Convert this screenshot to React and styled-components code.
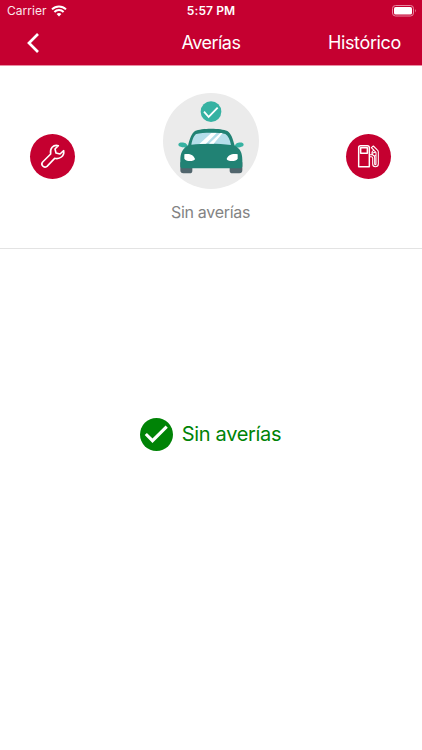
import React from "react";
import styled, { createGlobalStyle } from "styled-components";

const GlobalStyle = createGlobalStyle`
  * { box-sizing: border-box; }
  body { margin: 0; background: #fff; font-family: Inter, "Liberation Sans", sans-serif; }
`;

const Screen = styled.main`
  display: flex;
  flex-direction: column;
  width: 100%;
  height: 750px;
  background: #fff;
  overflow: hidden;
`;

const Header = styled.header`
  height: 66px;
  flex: none;
  background: #c50030;
  border-bottom: 1px solid #e98da3;
  color: #fff;
`;

const StatusBar = styled.div`
  display: grid;
  grid-template-columns: 1fr auto 1fr;
  align-items: center;
  height: 21px;
  padding: 0 5px 0 7px;
`;

const Carrier = styled.div`
  display: flex;
  align-items: center;
  gap: 4px;
  font-size: 12px;
  letter-spacing: 0.05px;
  color: #fbe6eb;
`;

const Clock = styled.div`
  margin-right: 2px;
  font-size: 12px;
  font-weight: 600;
  letter-spacing: 0.1px;
`;

const BatteryIcon = styled.svg`
  justify-self: end;
  display: block;
`;

const NavBar = styled.nav`
  display: grid;
  grid-template-columns: 1fr auto 1fr;
  align-items: center;
  height: 43px;
  padding: 0 21px 0 26px;
`;

const BackButton = styled.button`
  display: flex;
  justify-self: start;
  padding: 0;
  border: 0;
  background: none;
`;

const Title = styled.h1`
  margin: 0 5px 0 0;
  font-size: 18px;
  font-weight: 400;
  line-height: 22px;
  letter-spacing: -0.5px;
`;

const HistoryLink = styled.button`
  justify-self: end;
  padding: 0;
  border: 0;
  background: none;
  color: #fff;
  font: 400 18px/22px Inter, "Liberation Sans", sans-serif;
  letter-spacing: -0.35px;
`;

const Summary = styled.section`
  display: grid;
  grid-template-columns: 45px 1fr 45px;
  flex: none;
  height: 183px;
  padding: 27px 31px 0 30px;
  border-bottom: 1px solid #e3e3e3;
`;

const RoundButton = styled.button`
  width: 45px;
  height: 45px;
  margin-top: 41px;
  padding: 0;
  border: 0;
  border-radius: 50%;
  background: #c50030;

  svg { display: block; }
`;

const CarStatus = styled.div`
  display: flex;
  flex-direction: column;
  align-items: center;

  svg { display: block; }
`;

const CarLabel = styled.p`
  margin: 13px 0 0;
  color: #838383;
  font-size: 16px;
  line-height: 20px;
  letter-spacing: -0.3px;
`;

const Result = styled.section`
  display: flex;
  align-items: center;
  justify-content: center;
  gap: 9px;
  margin-top: 168px;
  padding-right: 1px;
  height: 34px;
  color: #008306;
`;

const ResultText = styled.span`
  font-size: 20px;
  line-height: 24px;
  letter-spacing: -0.32px;
`;

function WifiIcon() {
  return (
    <svg width="16" height="12" viewBox="0 0 16 12" fill="none" stroke="#fff" strokeWidth="2">
      <path d="M1 4.4C5 .5 11 .5 15 4.4M3.4 7C6 4.4 10 4.4 12.6 7" />
      <path d="M5.6 8.9C7 7.7 9 7.7 10.4 8.9L8 11.4Z" fill="#fff" stroke="none" />
    </svg>
  );
}

function CarIllustration() {
  return (
    <svg width="96" height="96" viewBox="24 24 288 288">
      <circle cx="168" cy="168" r="144" fill="#ebebeb" />
      <circle cx="168" cy="80" r="31" fill="#36b2a2" />
      <path d="M147 80L161 96L188 68" fill="none" stroke="#fff" strokeWidth="5.5" />
      <path d="M76 232H112V257Q112 265 104 265H85Q76 265 76 256ZM224 232H262V256Q262 265 253 265H233Q224 265 224 257Z" fill="#51656d" />
      <path d="M96 188C90 188 72 187 70 180C69 171 86 172 92 175L99 182ZM241 188C248 188 264 187 266 180C267 171 251 172 245 175L238 182Z" fill="#36b2a2" />
      <path d="M99 182C105 158 111 144 120 138C140 129 197 129 217 138C228 145 233 159 239 182C256 190 262 204 262 224V243Q262 250 254 250H84Q76 250 76 243V224C76 205 82 190 99 182Z" fill="#218274" />
      <path d="M109 179C112 163 117 151 124 147C143 142 193 142 211 147C220 153 225 164 228 180C190 175 146 175 109 179Z" fill="#b5deea" />
      <path d="M133 177L169 144H185L153 176ZM162 176L196 144H203L176 176Z" fill="#fff" />
      <path d="M88 208C101 204 117 209 120 222C118 230 92 231 88 221ZM248 208C235 204 218 209 215 222C217 230 244 231 248 221Z" fill="#fff" />
    </svg>
  );
}

function WrenchIcon() {
  return (
    <svg width="45" height="45" viewBox="29 26 135 135" fill="none" stroke="#fff" strokeWidth="4.8" strokeLinejoin="round">
      <path d="M114 61C98 57 88 70 91 86L67 110C60 118 70 130 80 123L103 99C118 103 133 92 130 76L119 86L107 83L104 71Z" />
    </svg>
  );
}

function FuelIcon() {
  return (
    <svg width="45" height="45" viewBox="29 26 135 135" fill="none" stroke="#fff" strokeWidth="4.4" strokeLinejoin="round">
      <path d="M67 124V67Q67 61 73 61H93Q99 61 99 67V124ZM73 67H93V84H73Z" />
      <path d="M101 94H105Q109 94 109 99V116Q109 124 117 124Q126 124 126 116V80Q126 76 122 73L111 62L105 67L112 74L107 80V86L112 91H119V115Q119 118 117 118Q115 118 115 115V98Q115 88 106 88H101M112 74L119 82V91M107 84L119 80" strokeWidth="3.2" />
    </svg>
  );
}

export default function App() {
  return (
    <>
      <GlobalStyle />
      <Screen>
        <Header>
          <StatusBar>
            <Carrier>Carrier <WifiIcon /></Carrier>
            <Clock>5:57 PM</Clock>
            <BatteryIcon width="25" height="12" viewBox="0 0 25 12">
              <rect x=".5" y=".5" width="21" height="10.5" rx="3" fill="none" stroke="#e887a0" />
              <rect x="2" y="2" width="18" height="7.5" rx="1.6" fill="#fff" />
              <path d="M23 4Q24.8 5.8 23 7.6Z" fill="#e887a0" />
            </BatteryIcon>
          </StatusBar>
          <NavBar>
            <BackButton aria-label="Volver">
              <svg width="14" height="22" viewBox="0 0 14 22" fill="none" stroke="#fff" strokeWidth="2.7">
                <path d="M12 2L3 11L12 20" />
              </svg>
            </BackButton>
            <Title>Averías</Title>
            <HistoryLink>Histórico</HistoryLink>
          </NavBar>
        </Header>
        <Summary>
          <RoundButton aria-label="Taller"><WrenchIcon /></RoundButton>
          <CarStatus>
            <CarIllustration />
            <CarLabel>Sin averías</CarLabel>
          </CarStatus>
          <RoundButton aria-label="Combustible"><FuelIcon /></RoundButton>
        </Summary>
        <Result>
          <svg width="33" height="33" viewBox="0 0 33 33">
            <circle cx="16.5" cy="16.5" r="16.5" fill="#008306" />
            <path d="M5.8 16L12.5 22.7L26.7 8.7" fill="none" stroke="#fff" strokeWidth="3.1" />
          </svg>
          <ResultText>Sin averías</ResultText>
        </Result>
      </Screen>
    </>
  );
}
